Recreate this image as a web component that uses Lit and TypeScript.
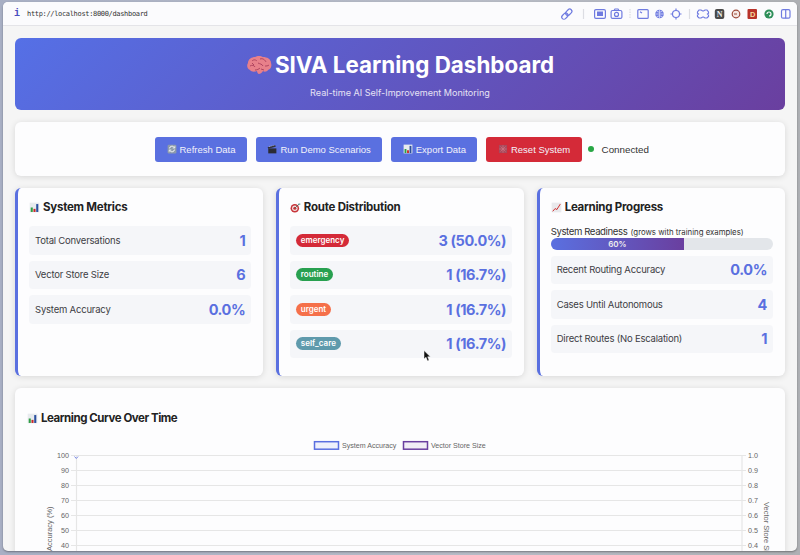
import { LitElement, html, css, svg } from "lit";
import { customElement } from "lit/decorators.js";

const barsIcon = html`<svg class="emo" viewBox="0 0 16 16"><rect x="1" y="1" width="14" height="14" fill="#e8ebee"/><rect x="2.500" y="8" width="3" height="6.500" fill="#2f9e44"/><rect x="6.500" y="10" width="3" height="4.500" fill="#c92a2a"/><rect x="10.500" y="3" width="3" height="11.500" fill="#2a4f9e"/></svg>`;
const dartIcon = html`<svg class="emo" viewBox="0 0 16 16"><circle cx="7" cy="9" r="6.200" fill="#c8343a"/><circle cx="7" cy="9" r="4" fill="#f0e4e4"/><circle cx="7" cy="9" r="2.200" fill="#c8343a"/><path d="M7 9 13 3" stroke="#4a6a55" stroke-width="1.200"/><path d="M12 2h3v2h-2z" fill="#5f9ea0"/></svg>`;
const trendIcon = html`<svg class="emo" viewBox="0 0 16 16"><rect x="1" y="1" width="14" height="14" fill="#e9e9ec"/><path d="M2.500 13.500 6 9.500l2.500 1.500L13.500 3" fill="none" stroke="#d02b2b" stroke-width="1.400"/></svg>`;
const brainIcon = html`<svg class="brain" viewBox="0 0 26 20"><path d="M4 15C1 14 .5 10 2 8 2 4 6 2 9 2c2-1.500 6-1.500 8 0 4 0 8 2 8 6 1 3 0 6-3 7-1 2-4 2-5 1-1 2-3 3-4 3-1 0-2-2-2-3-2 1-6 1-7-1z" fill="#e8808a"/><path d="M6 6c2-2 4-1 5 0M14 4c3-1 5 1 6 3M4 11c2-1 4-1 5 1M12 8c2 1 4 1 5 3M19 11c1 0 3 0 4-1M9 15c2 0 4-1 5-2M6 8l2 2M15 14l3 1" fill="none" stroke="#b04560" stroke-width="1"/></svg>`;
const refreshIcon = html`<svg class="emo" viewBox="0 0 16 16"><rect x="1" y="1" width="14" height="14" rx="2" fill="#8d9bab"/><path d="M4 7a4 4 0 0 1 7-2l1 1M12 9a4 4 0 0 1-7 2l-1-1" fill="none" stroke="#fff" stroke-width="1.500"/><path d="M12.500 3v3.500H9M3.500 13V9.500H7" fill="none" stroke="#fff" stroke-width="1"/></svg>`;
const clapIcon = html`<svg class="emo" viewBox="0 0 16 16"><rect x="2" y="7" width="13" height="8" fill="#2b2b33"/><path d="M1 5l12-3.500 1 2.700L2 7.500z" fill="#33333c"/><path d="M4 4.500 5 3M7 3.700 8 2.500M10.500 2.800l1-1" stroke="#ddd" stroke-width="1.200"/></svg>`;
const resetIcon = html`<svg class="emo" viewBox="0 0 16 16"><rect x="1.500" y="1.500" width="13" height="13" fill="#a84a5c"/><path d="M4 4l8 8M12 4l-8 8M2 8h12M8 2v12" stroke="#d67a86" stroke-width="1"/></svg>`;

const toolbarIcons = html`
  <svg class="tb" width="240" height="16" viewBox="0 0 240 16" fill="none" stroke="#6f7be0" stroke-width="1.200">
    <g transform="rotate(-45 15 8)"><rect x="8.500" y="5.800" width="7" height="4.400" rx="2.200"/><rect x="14" y="5.800" width="7" height="4.400" rx="2.200"/></g>
    <path d="M31.500 3v10" stroke="#dcdde3"/>
    <rect x="42.600" y="3.600" width="10.800" height="8.800" rx="1.300"/><rect x="45" y="5.500" width="6" height="4.500" fill="#6f7be0" stroke="none"/>
    <rect x="59.100" y="4.500" width="10.800" height="7.900" rx="1.500"/><circle cx="64.500" cy="8.400" r="2"/><path d="M62 4.500l1-1.500h3l1 1.500"/>
    <path d="M78 3v10" stroke="#dcdde3" stroke-dasharray="1.500 1"/>
    <rect x="85.800" y="3.600" width="10.400" height="8.800" rx="1"/><path d="M88 5.800l2 1.300"/>
    <circle cx="107.500" cy="8" r="4.300" fill="#6f7be0" stroke="none"/><path d="M103.300 8h8.400M107.500 3.800v8.400M104.500 5c2 1.500 4 1.500 6 0M104.500 11c2-1.500 4-1.500 6 0" stroke="#dfe2fa" stroke-width=".7"/>
    <circle cx="124" cy="8" r="3.500"/><path d="M124 2.500v2M124 11.500v2M118.500 8h2M127.500 8h2" />
    <path d="M137.500 3v10" stroke="#dcdde3"/>
    <path d="M147 4h2l1.700 1h.8L153 4h2l1.500 2v1.200l-1 .8 1 .8V10.500L155 12h-2l-1.500-1h-.8L149 12h-2l-1.500-1.500V8.800l1-.8-1-.8V6z"/>
    <g stroke="none">
      <rect x="162.800" y="3" width="9.500" height="10" rx="2" fill="#4a4a4a"/><text x="164.800" y="11" font-family="Liberation Serif, serif" font-size="8" font-weight="700" fill="#eee">N</text>
      <circle cx="184" cy="8" r="3.800" fill="#f5e8e4" stroke="#9c4a3a" stroke-width="1.200"/><path d="M182 8h3" stroke="#9c4a3a"/>
      <rect x="195.500" y="3" width="9.500" height="10" rx="1" fill="#b8322a"/><text x="198" y="11" font-family="Liberation Sans, sans-serif" font-size="7.500" font-weight="700" fill="#f4d9a0">D</text>
      <circle cx="217" cy="8" r="4.600" fill="#2f8f5a"/><path d="M215 8a2 2 0 1 1 2 2" stroke="#fff" fill="none"/>
    </g>
    <rect x="229.500" y="3.700" width="8.500" height="8.500" rx="1.500"/><path d="M233.700 3.700v8.500"/>
  </svg>`;

const Y0 = 67;
const rows = [0, 1, 2, 3, 4, 5, 6];
const chart = html`<svg class="chart" viewBox="0 0 770 165" width="770" height="165">
  <rect x="299.500" y="53.700" width="24" height="7.500" fill="#eef0fb" stroke="#5a6fe0" stroke-width="1.500"/>
  <text x="327" y="60" class="lg">System Accuracy</text>
  <rect x="388.500" y="53.700" width="24" height="7.500" fill="#f1edf5" stroke="#6a3f9f" stroke-width="1.500"/>
  <text x="416" y="60" class="lg">Vector Store Size</text>
  ${rows.map((i) => {
    const y = Y0 + i * 15;
    return svg`
      <path d="M56 ${y + 0.5}H731" stroke="#e6e6e6" stroke-width="1.200"/>
      <text x="54" y="${y + 3}" text-anchor="end" class="tick">${100 - i * 10}</text>
      <text x="733" y="${y + 3}" class="tick">${(1 - i / 10).toFixed(1)}</text>`;
  })}
  <path d="M61.500 67V165M727 67V165" stroke="#e6e6e6" stroke-width="1.200"/>
  <path d="M59.500 68.500l1.800 2 1.800-2" fill="none" stroke="#7b8ae6"/>
  <text transform="translate(36.500 163) rotate(-90)" class="axis">Accuracy (%)</text>
  <text transform="translate(749 114) rotate(90)" class="axis">Vector Store Size</text>
</svg>`;

const cursor = html`<svg class="cursor" width="8" height="12" viewBox="0 0 8 12"><path d="M1 .5V9l2-1.800L4.500 11l1.600-.7L4.700 6.800H7.400z" fill="#111" stroke="#fff" stroke-width=".5"/></svg>`;

@customElement("app-root")
export class AppRoot extends LitElement {
  static styles = css`
    :host { display: block; position: relative; width: 800px; height: 555px; overflow: hidden; background: linear-gradient(90deg, #a8afc4 0, #b7bbc6 60%, #aeb0b4 100%); font-family: Inter, "Liberation Sans", sans-serif; color: #333; padding: 2px 3px 4px 3px; box-sizing: border-box; }
    .win { height: 549px; background: #f5f5f5; border-radius: 5px; overflow: hidden; box-shadow: 0 1px 2px rgba(0,0,0,.35); }
    .bar { height: 24px; box-sizing: border-box; background: #fbfbfd; border-bottom: 1px solid #e4e4e8; display: flex; align-items: center; padding: 0 5px 0 11px; }
    .i { font: 700 10px "Liberation Mono", monospace; color: #4a4fc0; width: 13px; }
    .url { font: 7px "DejaVu Sans Mono", monospace; letter-spacing: -.33px; color: #333; margin-right: auto; }
    .tb { flex: none; }
    .main { padding: 12px 12px 0; display: flex; flex-direction: column; gap: 12px; }
    .hero { height: 72px; border-radius: 6px; background: linear-gradient(135deg, #5570e6 0%, #6a3f9f 100%); color: #fff; display: flex; flex-direction: column; align-items: center; box-sizing: border-box; padding-top: 13px; }
    .hero h1 { margin: 0; font-size: 22.400px; line-height: 28px; font-weight: 700; display: flex; align-items: center; gap: 3px; }
    .brain { width: 26px; height: 20px; }
    .hero p { margin: 8px 0 0; font-size: 9.050px; line-height: 12px; color: #e6e2f4; }
    .card { background: #fdfdfe; border-radius: 6px; box-shadow: 0 1px 6px rgba(0,0,0,.12); }
    .ctrl { height: 54px; display: flex; align-items: center; justify-content: center; gap: 9px; box-sizing: border-box; padding-left: 4px; font-family: "Liberation Sans", sans-serif; }
    .btn { height: 25px; display: flex; align-items: center; gap: 3px; padding: 0 11.500px; background: #5a70e0; color: #f2f2fa; border-radius: 3px; font-size: 9.500px; }
    .btn .emo { width: 10px; height: 10px; }
    .btn.red { background: #d42a38; }
    .emo { width: 11px; height: 11px; flex: none; }
    .dot { width: 6px; height: 6px; border-radius: 50%; background: #28a745; margin-left: -3px; }
    .st { font-size: 9.800px; color: #333; margin-left: -1px; }
    .grid { display: grid; grid-template-columns: repeat(3, 1fr); gap: 12.500px; }
    .panel { height: 188px; box-sizing: border-box; border-left: 3px solid #5a70e0; padding: 11px 12px 0 11px; }
    .panel h2, .chartc h2 { margin: 0 0 11px; font-size: 11.500px; line-height: 16px; font-weight: 700; color: #222; letter-spacing: -.25px; display: flex; align-items: center; gap: 3px; }
    .row { height: 28.500px; background: #f5f6f9; border-radius: 4px; display: flex; align-items: center; justify-content: space-between; padding: 0 6px; margin-bottom: 6px; font-size: 9.500px; letter-spacing: -.2px; color: #3d3d44; }
    .val { font-size: 14.500px; font-weight: 700; color: #5a70e0; letter-spacing: -.4px; }
    .tag { color: #fff; font-size: 8px; font-weight: 600; padding: 2px 5px; border-radius: 8px; line-height: 9px; letter-spacing: 0; display: block; }
    .prog { font-size: 9.600px; letter-spacing: -.4px; line-height: 11px; color: #333; white-space: nowrap; }
    .prog small { font-size: 7.800px; letter-spacing: 0; margin-left: 1px; }
    .track { height: 12px; border-radius: 6px; background: #e3e6ea; overflow: hidden; margin-bottom: 5.500px; }
    .fill { height: 100%; background: linear-gradient(90deg, #5a70e0, #6a3f9f); color: #eee; font-size: 8px; font-weight: 600; display: flex; align-items: center; justify-content: center; }
    .chartc { height: 200px; overflow: hidden; position: relative; }
    .chartc h2 { padding: 22px 0 0 12px; margin: 0; position: absolute; letter-spacing: -.45px; }
    .chart { display: block; }
    .lg { font: 7.100px "Liberation Sans", sans-serif; fill: #666; }
    .tick { font: 7.200px "Liberation Sans", sans-serif; fill: #666; }
    .axis { font: 7.500px "Liberation Sans", sans-serif; fill: #666; }
    .cursor { position: absolute; left: 423px; top: 350px; }
  `;

  private row(label: unknown, val: string) {
    return html`<div class="row"><span>${label}</span><span class="val">${val}</span></div>`;
  }
  private tag(t: string, c: string) {
    return html`<span class="tag" style="background:${c}">${t}</span>`;
  }

  render() {
    return html`<div class="win">
      <div class="bar"><span class="i">i</span><span class="url">http://localhost:8000/dashboard</span>${toolbarIcons}</div>
      <div class="main">
        <div class="hero"><h1>${brainIcon}SIVA Learning Dashboard</h1><p>Real-time AI Self-Improvement Monitoring</p></div>
        <div class="card ctrl">
          <div class="btn">${refreshIcon}Refresh Data</div>
          <div class="btn">${clapIcon}Run Demo Scenarios</div>
          <div class="btn">${barsIcon}Export Data</div>
          <div class="btn red">${resetIcon}Reset System</div>
          <span class="dot"></span><span class="st">Connected</span>
        </div>
        <div class="grid">
          <div class="card panel"><h2>${barsIcon} System Metrics</h2>
            ${this.row("Total Conversations", "1")}${this.row("Vector Store Size", "6")}${this.row("System Accuracy", "0.0%")}
          </div>
          <div class="card panel"><h2>${dartIcon} Route Distribution</h2>
            ${this.row(this.tag("emergency", "#d42a38"), "3 (50.0%)")}
            ${this.row(this.tag("routine", "#28a050"), "1 (16.7%)")}
            ${this.row(this.tag("urgent", "#f5704a"), "1 (16.7%)")}
            ${this.row(this.tag("self_care", "#5f9aac"), "1 (16.7%)")}
          </div>
          <div class="card panel"><h2>${trendIcon} Learning Progress</h2>
            <div class="prog">System Readiness <small>(grows with training examples)</small></div>
            <div class="track"><div class="fill" style="width:60%">60%</div></div>
            ${this.row("Recent Routing Accuracy", "0.0%")}${this.row("Cases Until Autonomous", "4")}${this.row("Direct Routes (No Escalation)", "1")}
          </div>
        </div>
        <div class="card chartc"><h2>${barsIcon} Learning Curve Over Time</h2>${chart}</div>
      </div>
    </div>${cursor}`;
  }
}
